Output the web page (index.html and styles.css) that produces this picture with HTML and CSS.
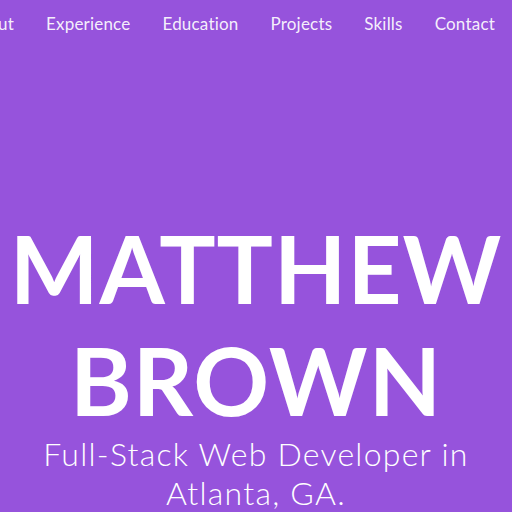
FILE: index.html
```html
<!DOCTYPE html>
<html lang="en">
<head>
<meta charset="utf-8">
<title>Matthew Brown</title>
<link rel="stylesheet" href="styles.css">
</head>
<body>
<header class="hero">
  <nav class="nav">
    <a class="nav-link" href="#about">About</a>
    <a class="nav-link" href="#experience">Experience</a>
    <a class="nav-link" href="#education">Education</a>
    <a class="nav-link" href="#projects">Projects</a>
    <a class="nav-link" href="#skills">Skills</a>
    <a class="nav-link" href="#contact">Contact</a>
  </nav>
  <div class="intro">
    <h1 class="name">MATTHEW BROWN</h1>
    <p class="tagline">Full-Stack Web Developer in Atlanta, GA.</p>
  </div>
</header>
</body>
</html>
```
FILE: styles.css
```css
html, body {
  margin: 0;
  padding: 0;
  background: #9653dc;
  overflow: hidden;
}
.hero {
  width: 512px;
  height: 512px;
  display: flex;
  flex-direction: column;
  font-family: "Lato", "Noto Sans", sans-serif;
  color: #ffffff;
}
.nav {
  display: flex;
  justify-content: flex-end;
  gap: 32px;
  padding: 12px 17px 0 0;
  height: 24px;
}
.nav-link {
  flex: none;
  color: rgba(255, 255, 255, 0.92);
  text-decoration: none;
  font-size: 17px;
  line-height: 24px;
  letter-spacing: 0.2px;
}
.intro {
  margin-top: 176px;
  text-align: center;
}
.name {
  margin: 0;
  font-size: 94px;
  font-weight: 700;
  line-height: 112px;
  letter-spacing: 1px;
}
.tagline {
  margin: -2px 20px 0;
  font-size: 32px;
  font-weight: 300;
  line-height: 39px;
  letter-spacing: 1.25px;
}
```
